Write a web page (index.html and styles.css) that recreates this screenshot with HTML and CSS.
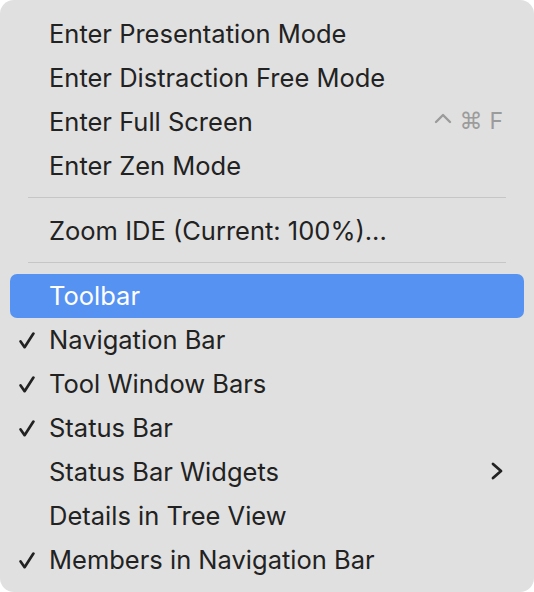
FILE: index.html
```html
<!DOCTYPE html>
<html>
<head>
<meta charset="utf-8">
<link rel="stylesheet" href="styles.css">
</head>
<body>
<div class="menu">
  <div class="item"><span class="label">Enter Presentation Mode</span></div>
  <div class="item"><span class="label">Enter Distraction Free Mode</span></div>
  <div class="item"><span class="label">Enter Full Screen</span><span class="shortcut"><svg class="ctrl" viewBox="0 0 18 12"><path d="M2 10 L9 3 L16 10"/></svg><span class="cmd">⌘</span><span class="kf">F</span></span></div>
  <div class="item"><span class="label">Enter Zen Mode</span></div>
  <div class="sep"></div>
  <div class="item"><span class="label">Zoom IDE (Current: 100%)...</span></div>
  <div class="sep"></div>
  <div class="item active"><span class="label">Toolbar</span></div>
  <div class="item"><svg class="check" viewBox="0 0 16 17"><path d="M1.6 9.4 L5.6 15.2 L14.4 1.6"/></svg><span class="label">Navigation Bar</span></div>
  <div class="item"><svg class="check" viewBox="0 0 16 17"><path d="M1.6 9.4 L5.6 15.2 L14.4 1.6"/></svg><span class="label">Tool Window Bars</span></div>
  <div class="item"><svg class="check" viewBox="0 0 16 17"><path d="M1.6 9.4 L5.6 15.2 L14.4 1.6"/></svg><span class="label">Status Bar</span></div>
  <div class="item"><span class="label">Status Bar Widgets</span><svg class="arrow" viewBox="0 0 12 18"><path d="M2 2 L10 9 L2 16"/></svg></div>
  <div class="item"><span class="label">Details in Tree View</span></div>
  <div class="item"><svg class="check" viewBox="0 0 16 17"><path d="M1.6 9.4 L5.6 15.2 L14.4 1.6"/></svg><span class="label">Members in Navigation Bar</span></div>
</div>
</body>
</html>
```
FILE: styles.css
```css
html, body {
  margin: 0;
  padding: 0;
  background: #ffffff;
}
.menu {
  width: 534px;
  height: 592px;
  box-sizing: border-box;
  background: #e0e0e0;
  border-radius: 14px;
  padding: 12px 10px 10px;
  display: flex;
  flex-direction: column;
  font-family: Inter, "Liberation Sans", sans-serif;
  font-size: 25.5px;
  color: #222222;
}
.item {
  position: relative;
  box-sizing: border-box;
  height: 44px;
  flex: none;
  display: flex;
  align-items: center;
  padding: 0 21px 2px 39px;
  border-radius: 7px;
}
.item.active {
  background: #5692f2;
  color: #ffffff;
}
.label {
  flex: 1;
  white-space: nowrap;
}
.sep {
  flex: none;
  height: 1px;
  background: #c6c6c6;
  margin: 9px 18px 11px;
}
.check {
  position: absolute;
  left: 9px;
  top: 14px;
  width: 16px;
  height: 17px;
  fill: none;
  stroke: #222222;
  stroke-width: 2.7;
  stroke-linecap: round;
  stroke-linejoin: round;
}
.shortcut {
  display: flex;
  align-items: center;
  color: #9b9b9b;
  gap: 7px;
}
.ctrl {
  width: 18px;
  height: 12px;
  margin-top: -6px;
  fill: none;
  stroke: #9b9b9b;
  stroke-width: 2.4;
  stroke-linecap: round;
  stroke-linejoin: round;
}
.cmd {
  font-family: "DejaVu Sans", sans-serif;
  font-size: 23px;
}
.kf {
  font-size: 23px;
}
.arrow {
  width: 12px;
  height: 18px;
  fill: none;
  stroke: #222222;
  stroke-width: 2.8;
  stroke-linecap: round;
  stroke-linejoin: round;
}
```
